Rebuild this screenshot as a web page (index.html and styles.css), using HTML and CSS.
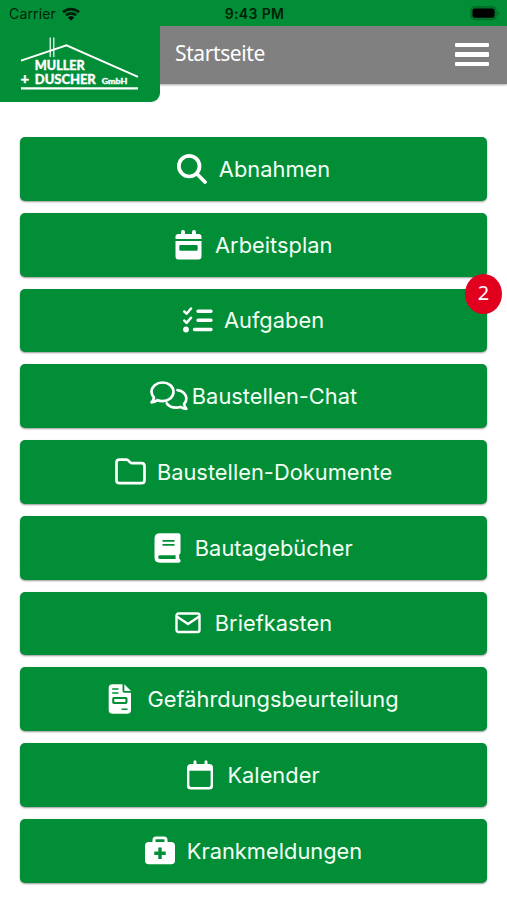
FILE: index.html
```html
<!DOCTYPE html>
<html lang="de">
<head>
<meta charset="utf-8">
<title>Startseite</title>
<link rel="stylesheet" href="styles.css">
</head>
<body>
<div class="status">
  <div class="carrier"><span>Carrier</span>
    <svg width="18" height="14" viewBox="0 0 18 14"><g fill="none" stroke="#001f08" stroke-width="2.7"><path d="M1 5.3A11.5 11.5 0 0 1 17 5.3"/><path d="M3.9 8.4A7.3 7.3 0 0 1 14.1 8.4"/></g><path d="M9 13.6L5.9 10.5a4.4 4.4 0 0 1 6.2 0z"/></svg>
  </div>
  <span class="time">9:43 PM</span>
  <svg class="battery" width="30" height="15" viewBox="0 0 30 15"><rect x=".7" y=".7" width="25.6" height="13" rx="4" fill="#007529" stroke="#006b25"/><rect x="2.5" y="2.5" width="22" height="9.3" rx="2.2"/><path d="M27.6 5v4.4q1.6-.7 1.6-2.2T27.6 5z" fill="#006b25"/></svg>
</div>
<header class="bar">
  <div class="logo">
    <svg width="160" height="77" viewBox="0 25 160 77"><g stroke="#fff" fill="none"><path d="M21 60.7L66.5 45.3 138 76.8" stroke-width="1.9"/><path d="M50.2 37.5V57M53.8 37.5V57" stroke-width="1.2"/><path d="M21 88.3H138" stroke-width="2.2"/></g><g class="logo-text"><text x="34.8" y="69.8" font-size="12.6" textLength="50">MULLER</text><text class="plus" x="20.5" y="84" font-size="15">+</text><text x="34.8" y="83.7" font-size="13" textLength="61">DUSCHER</text><text x="101.8" y="83.7" font-size="8" textLength="25.5" lengthAdjust="spacingAndGlyphs">GmbH</text></g></svg>
  </div>
  <h1>Startseite</h1>
  <div class="menu"><i></i><i></i><i></i></div>
</header>
<main>
  <div class="btn g13"><svg width="30" height="30" viewBox="0 0 30 30"><g fill="none" stroke="#fff" stroke-linecap="round"><circle cx="12.2" cy="12.2" r="10.3" stroke-width="3.7"/><path d="M20 20l8 8" stroke-width="3.8"/></g></svg><span>Abnahmen</span></div>
  <div class="btn g14"><svg width="27" height="30" viewBox="0 0 27 30"><path fill="#fff" fill-rule="evenodd" d="M.5 9V6.8Q.5 4 3.3 4H6V2q0-2 2-2t2 2v2h7V2q0-2 2-2t2 2v2h2.7q2.8 0 2.8 2.8V9zM.5 11h26v15.5q0 3-3 3h-20q-3 0-3-3zM5.5 15q-1.2 0-1.2 1.2v3.4q0 1.2 1.2 1.2h16q1.2 0 1.2-1.2v-3.4q0-1.2-1.2-1.2z"/></svg><span>Arbeitsplan</span></div>
  <div class="btn g11"><svg width="30" height="26" viewBox="0 0 30 26"><g fill="none" stroke="#fff" stroke-linecap="round" stroke-linejoin="round"><path stroke-width="2.5" d="M1.3 4.5l2.3 2.2L8 1.5M1.3 13.7l2.3 2.2L8 10.7"/><path stroke-width="3.4" d="M15 4.3h13M15 13.3h13M11.5 22.5H28"/></g><circle cx="3" cy="22.5" r="2.9" fill="#fff"/></svg><span>Aufgaben</span><b class="badge">2</b></div>
  <div class="btn g5"><svg width="38" height="30" viewBox="0 0 38 30"><g fill="none" stroke="#fff" stroke-width="2.7" stroke-linejoin="round" stroke-linecap="round"><path d="M12.5 1.5c6 0 11 4 11 9.3s-5 9.3-11 9.3c-1.8 0-3.4-.3-4.9-.9-1.8 1.2-4 2-6.1 2.1 1.2-1.3 2.1-2.9 2.5-4.6C2.4 15 1.5 13 1.5 10.8c0-5.2 5-9.3 11-9.3z"/><path d="M27.5 9.2c5 .7 8.900 4 8.900 8.300 0 2.100-.9 4-2.400 5.500.4 1.900 1.300 3.600 2.300 4.800-2.200-.1-4.300-.8-6-1.900-1.300.5-2.700.7-4.200.7-4.100 0-7.600-1.700-9.200-4.200"/></g></svg><span>Baustellen-Chat</span></div>
  <div class="btn g12"><svg width="31" height="27" viewBox="0 0 31 27"><path fill="none" stroke="#fff" stroke-width="2.7" stroke-linejoin="round" d="M4.500 1.600h6.700q1.200 0 2 .8l2 2q.8.8 2 .8h9.300q3 0 3 3v14q0 3-3 3h-22q-3 0-3-3V4.600q0-3 3-3z"/></svg><span>Baustellen-Dokumente</span></div>
  <div class="btn g14"><svg width="27" height="30" viewBox="0 0 27 30"><path fill="#fff" fill-rule="evenodd" d="M6 .2h18.500q2 0 2 2v17.600q0 1.300-1.300 1.800v4.200q1.400.3 1.400 1.900 0 2-2 2H6q-5.500 0-5.500-5.200V5.500Q.5.200 6 .2zM8.500 7v1.800h12V7zM8.500 11v1.800h12V11zM5.600 22.200q-1.400 0-1.400 1.900t1.400 1.900h16v-3.800z"/></svg><span>Bautagebücher</span></div>
  <div class="btn g15"><svg width="26" height="22" viewBox="0 0 26 22"><g fill="none" stroke="#fff" stroke-width="2.4" stroke-linejoin="round"><rect x="1.5" y="1.5" width="23" height="18.500" rx="2"/><path d="M1.800 4.500L13 12 24.200 4.500"/></g></svg><span>Briefkasten</span></div>
  <div class="btn g16"><svg width="24" height="30" viewBox="0 0 24 30"><path fill="#fff" fill-rule="evenodd" d="M4.500.3h10v6.500q0 2 2 2H23V26q0 3.800-3.800 3.800H4.500Q.7 29.800.7 26V4Q.7.300 4.500.300zM4.200 4.200v1.500h6.300V4.200zM4.200 8.200v1.500h6.300V8.200zM5.900 13q-1.700 0-1.700 1.700v3.600q0 1.700 1.700 1.700h11.900q1.700 0 1.700-1.700v-3.600q0-1.700-1.700-1.700zM6.300 15h11.100v3H6.300zM13.500 24.500V26h6v-1.500z"/><path fill="#fff" d="M16.400.3L23 6.900h-6.600z"/></svg><span>Gefährdungsbeurteilung</span></div>
  <div class="btn g15"><svg width="26" height="30" viewBox="0 0 26 30"><path fill="#fff" fill-rule="evenodd" d="M4.200 4H6.500V1.700Q6.500.2 8 .2t1.500 1.500V4h8V1.700q0-1.500 1.500-1.500t1.500 1.500V4h1.800Q26 4 26 7.500V26q0 3.600-3.700 3.600H3.700Q0 29.600 0 26V7.800Q0 4 4.200 4zM2.400 10.800v14.500q0 1.800 1.800 1.800h17.600q1.800 0 1.800-1.800V10.800z"/></svg><span>Kalender</span></div>
  <div class="btn g13"><svg width="30" height="29" viewBox="0 0 30 29"><path fill="#fff" fill-rule="evenodd" d="M7.500 6V4q0-3.500 3.500-3.500h8Q22.500.5 22.500 4v2h3.700Q30 6 30 9.800v14.700q0 3.800-3.800 3.800H3.800Q0 28.300 0 24.500V9.800Q0 6 3.800 6zM10.500 6h9V4q0-.8-.8-.8h-7.400q-.8 0-.8.8zM13.300 11.500v4h-4v3.400h4v4h3.400v-4h4v-3.400h-4v-4z"/></svg><span>Krankmeldungen</span></div>
</main>
</body>
</html>
```
FILE: styles.css
```css
* { box-sizing: border-box; }
body { margin: 0; width: 507px; height: 900px; overflow: hidden; background: #fff; font-family: Inter, "Liberation Sans", sans-serif; }
svg { display: block; flex: none; }
.status { height: 26px; background: #028e37; display: grid; grid-template-columns: 1fr auto 1fr; align-items: center; padding: 1px 7px 0 9px; font-size: 14px; color: #001f08; }
.carrier { display: flex; align-items: center; gap: 6px; letter-spacing: .15px; }
.time { font-size: 14px; font-weight: 600; letter-spacing: .35px; }
.battery { justify-self: end; }
.bar { height: 57.500px; background: #808080; display: flex; align-items: flex-start; box-shadow: 0 1px 2px rgba(0,0,0,.35); }
.logo { width: 160px; height: 77px; margin-top: -1px; background: #028e37; border-bottom-right-radius: 9px; flex: none; }
.logo-text { fill: #fff; stroke: #fff; stroke-width: .35px; font-family: Lato, sans-serif; font-weight: 900; }
.plus { font-weight: 700; }
h1 { margin: 13px 0 0 15px; font: 400 21px/28px "Noto Sans", sans-serif; letter-spacing: -.4px; color: #fff; }
.menu { margin: 17px 18px 0 auto; width: 34px; display: grid; gap: 5px; }
.menu i { height: 4.300px; background: #fff; border-radius: 1px; }
main { padding: 53.500px 20px 0 20px; display: grid; grid-auto-rows: 63.750px; gap: 12px; }
.btn { position: relative; display: flex; align-items: center; justify-content: center; background: #028e37; color: #f3fff5; border-radius: 5px; box-shadow: 0 1px 2px rgba(0,0,0,.4); font-size: 21.800px; letter-spacing: .03px; white-space: nowrap; }
.g5 { gap: 4px; }
.g11 { gap: 11px; }
.g12 { gap: 11px; }
.g13 { gap: 12px; }
.g14 { gap: 13.500px; }
.g15 { gap: 14px; }
.g16 { gap: 15px; }
.badge { position: absolute; top: -15px; right: -15px; width: 37px; height: 40px; border-radius: 50%; background: #e2001f; color: #fff; font: 400 20px/38px "Noto Sans", sans-serif; text-align: center; }
```
